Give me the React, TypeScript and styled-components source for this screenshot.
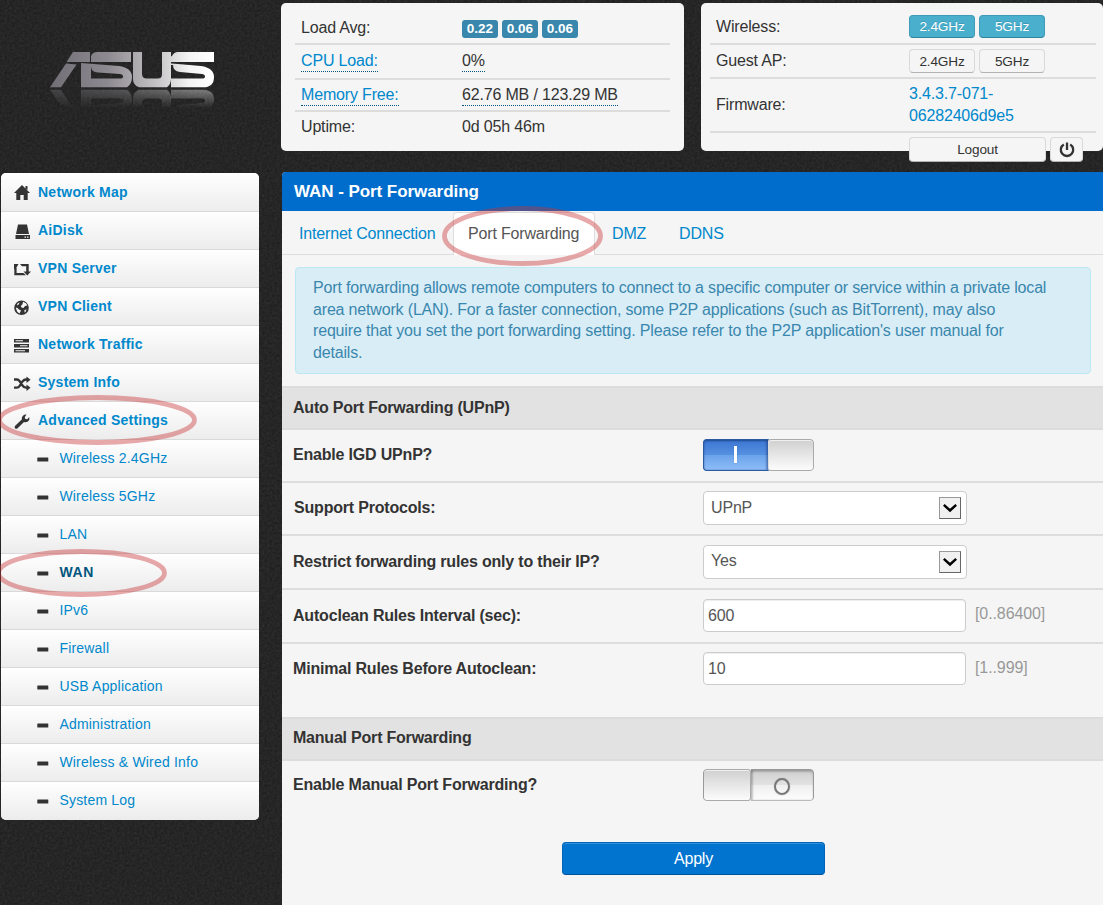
import React from "react";
import styled, { createGlobalStyle, css } from "styled-components";

const GlobalStyle = createGlobalStyle`
  *, *::before, *::after { box-sizing: border-box; }
  html, body { margin: 0; padding: 0; background: #252525; }
  body {
    font-family: "Liberation Sans", Arial, sans-serif;
    font-size: 16px;
    line-height: 22px;
    letter-spacing: -0.17px;
    color: #333;
    overflow: hidden;
  }
  input, button { font-family: inherit; letter-spacing: inherit; }
`;

const Page = styled.div`
  position: relative;
  isolation: isolate;
  display: flex;
  flex-direction: column;
  width: 1103px;
  height: 905px;
  overflow: hidden;
`;

const Texture = styled.svg`
  position: absolute;
  inset: 0;
  z-index: -1;
  width: 100%;
  height: 100%;
  filter { color-interpolation-filters: sRGB; }
`;

const Annotations = styled.svg`
  position: absolute;
  inset: 0;
  width: 100%;
  height: 100%;
  pointer-events: none;
`;

/* ---------- header ---------- */

const Header = styled.header`
  display: flex;
  align-items: flex-start;
  flex: none;
  height: 172px;
  padding-top: 3px;
`;

const Brand = styled.div`
  width: 281px;
  flex: none;
  padding: 45px 0 0 46px;
  svg { display: block; }
`;

const Card = styled.section<{ $w: number; $pad: string }>`
  width: ${(p) => p.$w}px;
  height: 148px;
  flex: none;
  padding: ${(p) => p.$pad};
  margin-right: 17px;
  border-radius: 5px;
  background: #f5f5f5;
`;

const StatRow = styled.div<{ $h: number; $label: number; $indent: number; $top?: number; $bottom?: number; $last?: boolean }>`
  display: grid;
  grid-template-columns: ${(p) => p.$label}px 1fr;
  align-items: center;
  height: ${(p) => p.$h}px;
  padding-left: ${(p) => p.$indent}px;
  padding-top: ${(p) => p.$top ?? 0}px;
  padding-bottom: ${(p) => p.$bottom ?? 0}px;
  border-bottom: ${(p) => (p.$last ? "0" : "2px solid #ddd")};
`;

const Inline = styled.div<{ $gap: number }>`
  display: flex;
  align-items: center;
  gap: ${(p) => p.$gap}px;
`;

const Dotted = styled.span<{ $link?: boolean }>`
  display: inline-block;
  line-height: 20px;
  color: ${(p) => (p.$link ? "#08c" : "#333")};
  border-bottom: 1px dotted #005580;
`;

const Badge = styled.span`
  width: 35.6px;
  height: 18px;
  margin-top: 1px;
  border-radius: 3px;
  background: #3a87ad;
  color: #fff;
  font-size: 13.5px;
  font-weight: bold;
  letter-spacing: 0;
  line-height: 17px;
  text-align: center;
`;

const SmallButton = styled.button<{ $info?: boolean; $w: number; $h: number }>`
  display: flex;
  align-items: center;
  justify-content: center;
  width: ${(p) => p.$w}px;
  height: ${(p) => p.$h}px;
  padding: 0;
  border-radius: 4px;
  font-size: 13.6px;
  letter-spacing: -0.15px;
  color: #333;
  background: #f5f5f5;
  border: 1px solid #d9d9d9;
  border-bottom-color: #b3b3b3;
  ${(p) =>
    p.$info &&
    css`
      color: #fff;
      background: #49afcd;
      border-color: #3e9cb8 #3e9cb8 #2f839c;
      text-shadow: 0 -1px 0 rgba(0, 0, 0, 0.15);
    `}
`;

const FirmwareLink = styled.a`
  color: #08c;
  width: 120px;
  line-height: 22px;
`;

/* ---------- body ---------- */

const Body = styled.div`
  display: flex;
  align-items: flex-start;
  flex: 1;
`;

const Menu = styled.nav`
  width: 258px;
  height: 647px;
  margin: 1px 23px 0 1px;
  flex: none;
  display: flex;
  flex-direction: column;
  border-radius: 5px;
  overflow: hidden;
  background: #ececec;
`;

const MenuItem = styled.a<{ $sub?: boolean; $active?: boolean }>`
  display: flex;
  align-items: center;
  flex: none;
  height: 38px;
  padding-left: ${(p) => (p.$sub ? 36 : 12)}px;
  border-bottom: 1px solid #d9d9d9;
  background: linear-gradient(#fff, #ececec);
  color: ${(p) => (p.$active ? "#005580" : "#08c")};
  font-size: 14px;
  font-weight: ${(p) => (p.$sub && !p.$active ? "normal" : "bold")};
  letter-spacing: ${(p) => (p.$active ? 0.6 : p.$sub ? 0.2 : 0.24)}px;
  svg { flex: none; margin-top: 2px; }
  span {
    margin-left: ${(p) => (p.$sub ? 10.4 : 7)}px;
    margin-top: -2px;
  }
  &:first-child { height: 39px; }
  &:first-child span { margin-top: 0; }
  &:last-child { border-bottom: 0; }
`;

const Content = styled.main`
  width: 821px;
  height: 733px;
  flex: none;
  display: flex;
  flex-direction: column;
  background: #f5f5f5;
  border-top-left-radius: 4px;
  overflow: hidden;
`;

const Title = styled.h1`
  margin: 0;
  height: 39px;
  flex: none;
  padding-left: 12px;
  background: #006dcc;
  color: #fff;
  font-size: 17px;
  letter-spacing: -0.06px;
  line-height: 40px;
`;

const Tabs = styled.div`
  display: flex;
  flex: none;
  height: 44px;
  padding: 1px 0 0 1px;
  border-bottom: 1px solid #ddd;
`;

const Tab = styled.a<{ $active?: boolean; $w: number; $indent?: number }>`
  width: ${(p) => p.$w}px;
  height: 43px;
  padding-left: ${(p) => p.$indent ?? 15}px;
  line-height: 41px;
  color: #08c;
  border: 1px solid transparent;
  border-bottom: 0;
  ${(p) =>
    p.$active &&
    css`
      color: #555;
      background: #fff;
      border-color: #ddd;
      border-radius: 4px 4px 0 0;
      padding-left: 14px;
    `}
`;

const Notice = styled.p`
  margin: 12px 12px 12px 13px;
  height: 107px;
  flex: none;
  padding: 9px 17px 0;
  border: 1px solid #bce8f1;
  border-radius: 4px;
  background: #d9edf7;
  color: #3a87ad;
  letter-spacing: -0.17px;
  line-height: 21.6px;
`;

const SectionHead = styled.h2<{ $line?: number }>`
  margin: 0;
  height: 44px;
  flex: none;
  padding-left: 11px;
  border: solid #dcdcdc;
  border-width: 2px 0;
  background: #e2e2e2;
  font-size: 16px;
  letter-spacing: -0.21px;
  line-height: ${(p) => p.$line ?? 39}px;
`;

const FieldRow = styled.div<{ $h: number; $top: number; $last?: boolean }>`
  display: grid;
  grid-template-columns: 421px auto 1fr;
  align-items: start;
  height: ${(p) => p.$h}px;
  flex: none;
  padding-top: ${(p) => p.$top}px;
  border-bottom: ${(p) => (p.$last ? "0" : "2px solid #ddd")};
`;

const Label = styled.label<{ $indent?: number; $line?: number }>`
  padding-left: ${(p) => p.$indent ?? 11}px;
  font-weight: bold;
  letter-spacing: -0.19px;
  line-height: ${(p) => p.$line ?? 34}px;
`;

const SelectBox = styled.div`
  display: flex;
  align-items: center;
  justify-content: space-between;
  width: 264px;
  height: 34px;
  padding: 0 5px 0 7px;
  border: 1px solid #ccc;
  border-radius: 4px;
  background: #fff;
  color: #555;
  line-height: 30px;
`;

const SelectValue = styled.span<{ $lift: number }>`
  padding-bottom: ${(p) => p.$lift}px;
`;

const DropArrow = styled.i`
  display: flex;
  align-items: center;
  justify-content: center;
  width: 22px;
  height: 22px;
  border: 1px solid #999;
  border-right-color: #666;
  border-bottom-color: #666;
  background: #f0f0f0;
`;

const TextInput = styled.input`
  width: 263px;
  height: 33px;
  padding: 1px 5px 0 4px;
  border: 1px solid #ccc;
  border-radius: 4px;
  background: #fff;
  box-shadow: inset 0 1px 1px rgba(0, 0, 0, 0.075);
  color: #555;
  font-size: 16px;
  outline: 0;
`;

const Hint = styled.span<{ $line?: number }>`
  padding-left: 9px;
  color: #999;
  letter-spacing: -0.1px;
  line-height: ${(p) => p.$line ?? 29}px;
`;

const Switch = styled.div<{ $on?: boolean }>`
  display: flex;
  width: 111px;
  height: 32px;
  border-radius: 4px;
  overflow: hidden;
  background: ${(p) => (p.$on ? "linear-gradient(90deg, #4a7fc8 66px, transparent 66px)" : "none")};
`;

const Track = styled.div<{ $on?: boolean }>`
  display: flex;
  align-items: center;
  justify-content: center;
  width: ${(p) => (p.$on ? 65 : 63)}px;
  border: 1px solid #999;
  ${(p) =>
    p.$on
      ? css`
          border-color: #2c5a9e;
          border-right: 0;
          border-radius: 4px 0 0 4px;
          background: linear-gradient(#3b76d3, #5590e0 49%, #6aa3ea 50%, #8ebdf8);
          box-shadow: inset 0 1px 2px rgba(20, 50, 110, 0.6), inset -2px 0 2px rgba(20, 50, 110, 0.35);
        `
      : css`
          border-left: 0;
          border-bottom-color: #bbb;
          border-radius: 0 4px 4px 0;
          background: linear-gradient(#cfcfcf, #e2e2e2 49%, #efefef 50%, #fdfdfd);
          box-shadow: inset 0 2px 2px rgba(0, 0, 0, 0.2), inset 2px 0 2px rgba(0, 0, 0, 0.2);
        `}
`;

const Knob = styled.div<{ $left?: boolean }>`
  width: ${(p) => (p.$left ? 48 : 46)}px;
  border: 1px solid #aaa;
  border-left-color: ${(p) => (p.$left ? "#999" : "#ddd")};
  border-radius: ${(p) => (p.$left ? "4px 3px 3px 4px" : "3px 4px 4px 3px")};
  background: linear-gradient(#d0d0d0, #fcfcfc);
  box-shadow: inset 0 1px 0 #f0f0f0;
`;

const OnMark = styled.b`
  width: 3px;
  height: 17px;
  margin: -1px 2px 0 0;
  background: #fff;
  box-shadow: 0 0 1px #28589c;
`;

const OffMark = styled.b`
  width: 16px;
  height: 17px;
  margin-top: 2px;
  border: 2.5px solid #777;
  border-radius: 50%;
  box-shadow: 0 0 1px #777;
`;

const Apply = styled.button`
  width: 263px;
  height: 33px;
  margin: 31px 0 0 280px;
  flex: none;
  padding: 0;
  border: 1px solid #0065b8;
  border-bottom-color: #00549c;
  border-radius: 4px;
  background: #0074cf;
  box-shadow: inset 0 1px 0 rgba(255, 255, 255, 0.2);
  color: #fff;
  font-size: 16px;
`;

/* ---------- drawings ---------- */

const LogoShape = () => (
  <g fillRule="evenodd">
    <path d="M73 52H90V62H66.500Z M66 63.500L76.500 64.500L61 87.300H50Z" />
    <path d="M91 56Q93 52 97 52H131V62H91Z" />
    <path d="M81 63L119 66Q132 68 132 77Q132 84 127 87.300H81ZM91 66Q91 72 98 72.500L120 74Q123 74.500 123 76.500Q123 78.500 120 78.500H91Z" />
    <path d="M133 52H142V74Q142 78.500 147 78.500H158Q162 78.500 162 74V52H171V79Q171 84 167 87.300H139Q133 85 133 79Z" />
    <path d="M172 56Q174 52 178 52H214V62H163V60Z" />
    <path d="M166 63L201 66Q214 68 214 77Q214 87.300 203 87.300H171V64ZM173 65Q173 71 180 72L202 74Q205 74.500 205 76.500Q205 78.500 202 78.500H171V65Z" />
  </g>
);

const Logo = () => (
  <svg width="175" height="65" viewBox="46 48 175 65">
    <defs>
      <linearGradient id="metal" gradientUnits="userSpaceOnUse" x1="50" y1="0" x2="214" y2="0">
        <stop offset="0" stopColor="#716e76" />
        <stop offset="0.35" stopColor="#8d8990" />
        <stop offset="0.65" stopColor="#c5c3c5" />
        <stop offset="0.85" stopColor="#f4f4f4" />
        <stop offset="1" stopColor="#fff" />
      </linearGradient>
      <linearGradient id="fade" gradientUnits="userSpaceOnUse" x1="0" y1="89" x2="0" y2="108">
        <stop offset="0" stopColor="#fff" stopOpacity="0.42" />
        <stop offset="1" stopColor="#fff" stopOpacity="0" />
      </linearGradient>
      <mask id="reflect" maskUnits="userSpaceOnUse" x="46" y="88" width="175" height="25">
        <rect x="46" y="88" width="175" height="25" fill="url(#fade)" />
      </mask>
    </defs>
    <g fill="url(#metal)"><LogoShape /></g>
    <g mask="url(#reflect)">
      <g fill="url(#metal)" transform="translate(0 177) scale(1 -1)"><LogoShape /></g>
    </g>
  </svg>
);

type IconName = "home" | "disk" | "repeat" | "globe" | "server" | "shuffle" | "wrench";

const glyphs: Record<IconName, React.ReactNode> = {
  home: <path d="M8 0L16 8H13.700V15H9.700V10H6.300V15H2.300V8H0L8 0ZM11.500 1H13.500V5L11.500 3.500Z" />,
  disk: (
    <>
      <path d="M4 0.500H13L15 10H2Z" />
      <path fillRule="evenodd" d="M1.500 11H16V15H1.500ZM10.500 12.500H12V13.700H10.500ZM13 12.500H14.500V13.700H13Z" />
    </>
  ),
  repeat: <path d="M0 2L2.600 5.500V11H9.500L12 13.300H0.300V7H0ZM0 2H4.500L2.800 5H0ZM6 2H14.700V9.500H17L13.300 13.500L9.500 9.500H12.200V4.200H8Z" />,
  globe: (
    <>
      <circle cx="7.500" cy="7.800" r="7.300" />
      <path fill="#f6f6f6" d="M9 1.700L12 3.200L13.300 5.500L11 6L9.500 8L7.500 7.500L6.800 6L8.500 4.200ZM1.700 7.500L3.500 8L5 9.500L7 10.500L6.300 12L5.500 13.500L3.200 11.700ZM3 4L5.500 2.300L5 4L3.500 5.500ZM10.500 10L12.500 9.500L11.500 12L10.500 12.500Z" />
    </>
  ),
  server: (
    <path fillRule="evenodd" d="M0 1H15V4.500H0ZM1.500 2.300V3.300H9V2.300ZM0 6H15V9.500H0ZM6 7.300V8.300H13.500V7.300ZM0 11H15V14.500H0ZM1.500 12.300V13.300H11V12.300Z" />
  ),
  shuffle: (
    <>
      <path fill="none" stroke="#333" strokeWidth="2.300" d="M0 3.500H2.800Q4.500 3.500 5.500 5L8.500 9.500Q10 11.700 12 11.700H13M0 11.700H2.800Q4.500 11.700 5.500 10.200L8.500 5.500Q10 3.500 12 3.500H13" />
      <path d="M12.500 0.500L16.500 3.700L12.500 7ZM12.500 8.500L16.500 11.700L12.500 15Z" />
    </>
  ),
  wrench: (
    <path d="M12.500 0.600L10.700 3.200L11.400 5L13.200 5.300L15.300 3Q16 6 13.800 7.500Q12 8.600 10 7.900L3.600 14.300Q2.200 15.400 1 14.300Q0 13 1.200 11.700L7.800 5.600Q7.400 2.900 9.200 1.400Q10.800 0.200 12.500 0.600Z" />
  ),
};

const Icon = ({ name }: { name: IconName }) => (
  <svg width="18" height="16" viewBox="-1 0 18 16" fill="#333">{glyphs[name]}</svg>
);

const Dash = () => (
  <svg width="12" height="6" viewBox="0 0 12 6">
    <rect x="0.300" y="0.500" width="11" height="4" rx="0.500" fill="#333" />
  </svg>
);

const Power = () => (
  <svg width="16" height="16" viewBox="0 0 16 16" fill="none" stroke="#333" strokeWidth="2.300">
    <path d="M4.800 2.500A6.200 6.200 0 1 0 11.200 2.500" />
    <path d="M8 0.500V8" />
  </svg>
);

const Chevron = () => (
  <svg width="14" height="10" viewBox="0 0 14 10" fill="none" stroke="#000" strokeWidth="2.500">
    <path d="M0.800 1.800L7 7.500L13.200 1.800" />
  </svg>
);

const mainItems: [IconName, string][] = [
  ["home", "Network Map"],
  ["disk", "AiDisk"],
  ["repeat", "VPN Server"],
  ["globe", "VPN Client"],
  ["server", "Network Traffic"],
  ["shuffle", "System Info"],
  ["wrench", "Advanced Settings"],
];

const subItems = [
  "Wireless 2.4GHz",
  "Wireless 5GHz",
  "LAN",
  "WAN",
  "IPv6",
  "Firewall",
  "USB Application",
  "Administration",
  "Wireless & Wired Info",
  "System Log",
];

const Select = ({ value, lift = 2 }: { value: string; lift?: number }) => (
  <SelectBox>
    <SelectValue $lift={lift}>{value}</SelectValue>
    <DropArrow><Chevron /></DropArrow>
  </SelectBox>
);

export default function App() {
  return (
    <>
      <GlobalStyle />
      <Page>
        <Texture>
          <filter id="grain" x="0" y="0" width="100%" height="100%">
            <feTurbulence type="fractalNoise" baseFrequency="0.4" numOctaves="2" seed="4" />
            <feColorMatrix values="0.09 0 0 0 0.103  0.09 0 0 0 0.103  0.09 0 0 0 0.103  0 0 0 0 1" />
          </filter>
          <rect width="100%" height="100%" filter="url(#grain)" />
        </Texture>

        <Header>
          <Brand><Logo /></Brand>
          <Card $w={403} $pad="6px 14px 0">
            <StatRow $h={36} $label={161} $indent={6} $top={4}>
              <span>Load Avg:</span>
              <Inline $gap={4.4}><Badge>0.22</Badge><Badge>0.06</Badge><Badge>0.06</Badge></Inline>
            </StatRow>
            <StatRow $h={35} $label={161} $indent={6} $bottom={2}>
              <span><Dotted $link>CPU Load:</Dotted></span>
              <span><Dotted>0%</Dotted></span>
            </StatRow>
            <StatRow $h={32} $label={161} $indent={6}>
              <span><Dotted $link>Memory Free:</Dotted></span>
              <span><Dotted>62.76 MB / 123.29 MB</Dotted></span>
            </StatRow>
            <StatRow $h={29} $label={161} $indent={6} $last>
              <span>Uptime:</span>
              <span>0d 05h 46m</span>
            </StatRow>
          </Card>
          <Card $w={402} $pad="4px 7px 0 9px">
            <StatRow $h={38} $label={193} $indent={6} $top={3}>
              <span>Wireless:</span>
              <Inline $gap={4}>
                <SmallButton $info $w={66} $h={23}>2.4GHz</SmallButton>
                <SmallButton $info $w={66} $h={23}>5GHz</SmallButton>
              </Inline>
            </StatRow>
            <StatRow $h={34} $label={193} $indent={6}>
              <span>Guest AP:</span>
              <Inline $gap={4}>
                <SmallButton $w={66} $h={24}>2.4GHz</SmallButton>
                <SmallButton $w={66} $h={24}>5GHz</SmallButton>
              </Inline>
            </StatRow>
            <StatRow $h={54} $label={193} $indent={6}>
              <span>Firmware:</span>
              <FirmwareLink>3.4.3.7-071-<br />06282406d9e5</FirmwareLink>
            </StatRow>
            <StatRow $h={33} $label={193} $indent={6} $last>
              <span />
              <Inline $gap={4}>
                <SmallButton $w={137} $h={25}>Logout</SmallButton>
                <SmallButton $w={33} $h={25}><Power /></SmallButton>
              </Inline>
            </StatRow>
          </Card>
        </Header>

        <Body>
          <Menu>
            {mainItems.map(([icon, text]) => (
              <MenuItem key={text}><Icon name={icon} /><span>{text}</span></MenuItem>
            ))}
            {subItems.map((text) => (
              <MenuItem key={text} $sub $active={text === "WAN"}><Dash /><span>{text}</span></MenuItem>
            ))}
          </Menu>

          <Content>
            <Title>WAN - Port Forwarding</Title>
            <Tabs>
              <Tab $w={170}>Internet Connection</Tab>
              <Tab $active $w={142}>Port Forwarding</Tab>
              <Tab $w={68} $indent={16}>DMZ</Tab>
              <Tab $w={80}>DDNS</Tab>
            </Tabs>
            <Notice>
              Port forwarding allows remote computers to connect to a specific computer or service within a private local
              <br />area network (LAN). For a faster connection, some P2P applications (such as BitTorrent), may also
              <br />require that you set the port forwarding setting. Please refer to the P2P application's user manual for
              <br />details.
            </Notice>

            <SectionHead>Auto Port Forwarding (UPnP)</SectionHead>
            <FieldRow $h={53} $top={9}>
              <Label $line={32}>Enable IGD UPnP?</Label>
              <Switch $on><Track $on><OnMark /></Track><Knob /></Switch>
            </FieldRow>
            <FieldRow $h={53} $top={8}>
              <Label $indent={12}>Support Protocols:</Label>
              <Select value="UPnP" lift={0} />
            </FieldRow>
            <FieldRow $h={54} $top={9}>
              <Label>Restrict forwarding rules only to their IP?</Label>
              <Select value="Yes" />
            </FieldRow>
            <FieldRow $h={54} $top={9}>
              <Label>Autoclean Rules Interval (sec):</Label>
              <TextInput defaultValue="600" />
              <Hint>[0..86400]</Hint>
            </FieldRow>
            <FieldRow $h={73} $top={8} $last>
              <Label>Minimal Rules Before Autoclean:</Label>
              <TextInput defaultValue="10" />
              <Hint $line={31}>[1..999]</Hint>
            </FieldRow>

            <SectionHead $line={37}>Manual Port Forwarding</SectionHead>
            <FieldRow $h={50} $top={8} $last>
              <Label $line={32}>Enable Manual Port Forwarding?</Label>
              <Switch><Knob $left /><Track><OffMark /></Track></Switch>
            </FieldRow>
            <Apply>Apply</Apply>
          </Content>
        </Body>

        <Annotations fill="none" stroke="rgba(200,50,55,0.42)" strokeWidth="4.800">
          <ellipse cx="97" cy="420" rx="97.500" ry="22.500" />
          <ellipse cx="81.500" cy="573" rx="83" ry="21.500" />
          <ellipse cx="522.500" cy="236" rx="78" ry="27.500" />
        </Annotations>
      </Page>
    </>
  );
}
